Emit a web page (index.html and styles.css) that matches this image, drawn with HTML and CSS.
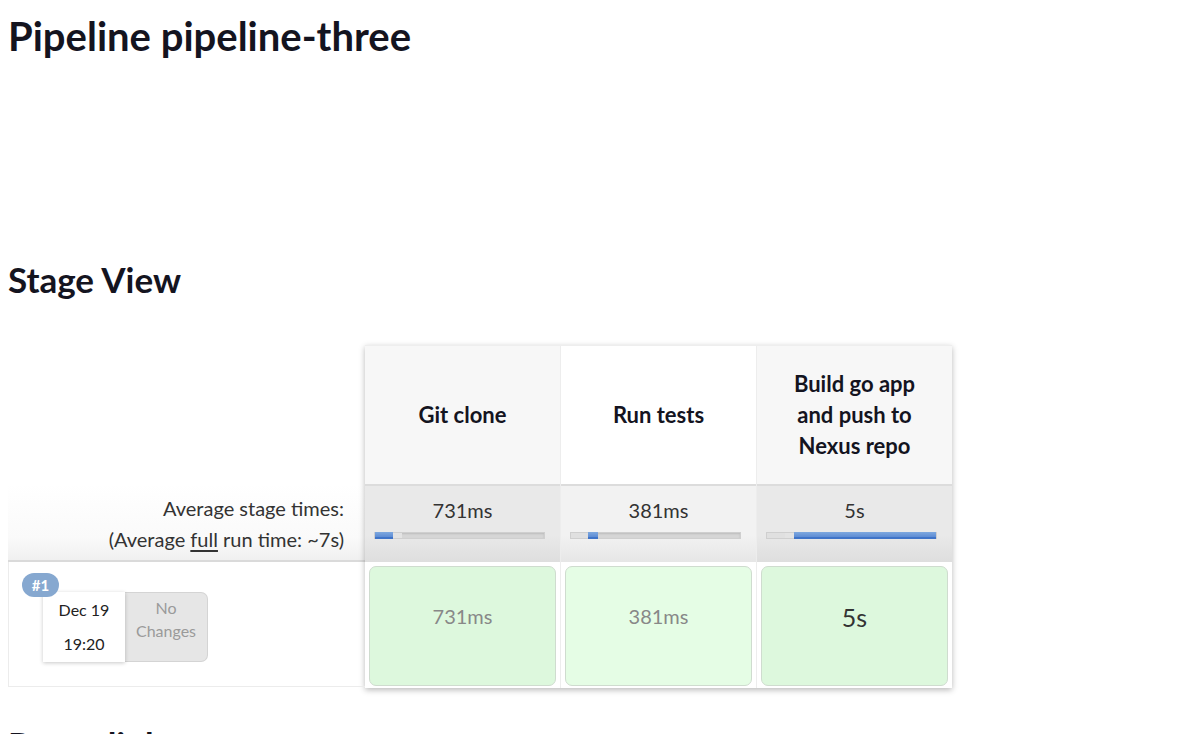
FILE: index.html
```html
<!DOCTYPE html>
<html>
<head>
<meta charset="utf-8">
<title>Pipeline pipeline-three</title>
<link rel="stylesheet" href="styles.css">
</head>
<body>
<h1 class="title">Pipeline pipeline-three</h1>
<h2 class="section">Stage View</h2>
<div class="stage-view">
  <div class="left-col">
    <div class="left-head"></div>
    <div class="left-avg">
      <div>Average stage times:</div>
      <div>(Average <u>full</u> run time: ~7s)</div>
    </div>
    <div class="left-build">
      <span class="badge">#1</span>
      <div class="build-info">
        <div class="build-date">
          <div>Dec 19</div>
          <div>19:20</div>
        </div>
        <div class="changes">No<br>Changes</div>
      </div>
    </div>
  </div>
  <div class="stages">
    <div class="stage-col odd">
      <div class="stage-head">Git clone</div>
      <div class="stage-avg">
        <div class="avg-time">731ms</div>
        <div class="track"><span class="seg-pre" style="width:0px"></span><span class="seg-bar" style="width:18px"></span><span class="seg-light" style="width:9px"></span></div>
      </div>
      <div class="stage-build"><div class="box box-a">731ms</div></div>
    </div>
    <div class="stage-col even">
      <div class="stage-head">Run tests</div>
      <div class="stage-avg">
        <div class="avg-time">381ms</div>
        <div class="track"><span class="seg-pre" style="width:17px"></span><span class="seg-bar" style="width:10px"></span></div>
      </div>
      <div class="stage-build"><div class="box box-b">381ms</div></div>
    </div>
    <div class="stage-col odd">
      <div class="stage-head">Build go app<br>and push to<br>Nexus repo</div>
      <div class="stage-avg">
        <div class="avg-time">5s</div>
        <div class="track"><span class="seg-pre" style="width:18px"></span><span class="seg-light" style="width:9px"></span><span class="seg-bar" style="width:144px"></span></div>
      </div>
      <div class="stage-build"><div class="box box-a big">5s</div></div>
    </div>
  </div>
</div>
<h2 class="section next">Permalinks</h2>
</body>
</html>
```

FILE: styles.css
```css
html, body {
  margin: 0;
  padding: 0;
  background: #fff;
}
body {
  padding: 0 8px;
  font-family: Lato, "Liberation Sans", sans-serif;
  color: #14141f;
  overflow: hidden;
  height: 734px;
}
.title {
  font-size: 40px;
  line-height: 48px;
  font-weight: 700;
  margin: 12px 0 0;
}
.section {
  font-size: 35px;
  line-height: 42px;
  font-weight: 700;
  margin: 198px 0 0;
}
.section.next {
  margin-top: 35px;
}
.stage-view {
  display: flex;
  margin-top: 45px;
}
.left-col {
  width: 357px;
  display: flex;
  flex-direction: column;
}
.left-head {
  height: 139px;
}
.left-avg {
  height: 78px;
  box-sizing: border-box;
  padding: 9px 21px 0 0;
  text-align: right;
  font-size: 20px;
  line-height: 31px;
  color: #333;
  background: linear-gradient(#fff 0%, #fafafa 70%, #f0f0f0 100%);
  border-bottom: 2px solid #dadada;
}
.left-avg u {
  text-decoration-thickness: 2px;
  text-underline-offset: 3px;
}
.left-build {
  position: relative;
  height: 125px;
  box-sizing: border-box;
  border-left: 1px solid #ececec;
  border-bottom: 1px solid #ececec;
  padding: 30px 0 0 34px;
}
.badge {
  position: absolute;
  left: 13px;
  top: 11px;
  width: 37px;
  height: 24px;
  border-radius: 12px;
  background: #86a8d0;
  color: #fff;
  font-weight: 700;
  font-size: 15px;
  line-height: 24px;
  text-align: center;
  z-index: 2;
}
.build-info {
  display: flex;
}
.build-date {
  width: 82px;
  height: 70px;
  box-sizing: border-box;
  background: #fff;
  box-shadow: 0 1px 4px rgba(0, 0, 0, 0.22);
  text-align: center;
  font-size: 16px;
  line-height: 34px;
  color: #222;
  padding-top: 1px;
  position: relative;
  z-index: 1;
}
.changes {
  width: 83px;
  height: 70px;
  box-sizing: border-box;
  background: #e6e6e6;
  border: 1px solid #d4d4d4;
  border-left: none;
  border-radius: 0 7px 7px 0;
  text-align: center;
  font-size: 16px;
  line-height: 23px;
  color: #9a9a9a;
  padding-top: 3px;
}
.stages {
  display: flex;
  box-shadow: 0 2px 6px rgba(0, 0, 0, 0.28);
  border-top: 1px solid #eee;
  align-self: flex-start;
}
.stage-col {
  width: 196px;
  display: flex;
  flex-direction: column;
  border-right: 1px solid #ededed;
  box-sizing: border-box;
}
.stage-col:last-child {
  border-right: none;
  width: 195px;
}
.stage-head {
  height: 138px;
  display: flex;
  align-items: center;
  justify-content: center;
  text-align: center;
  font-size: 22px;
  line-height: 31px;
  font-weight: 700;
  color: #14141f;
  padding-bottom: 2px;
  box-sizing: border-box;
}
.odd .stage-head {
  background: #f7f7f7;
}
.even .stage-head {
  background: #fff;
}
.stage-avg {
  height: 78px;
  box-sizing: border-box;
  border-top: 2px solid #dcdcdc;
  padding: 9px 0 0 9px;
}
.odd .stage-avg {
  background: linear-gradient(#e9e9e9 0%, #e9e9e9 65%, #dedede 100%);
}
.even .stage-avg {
  background: linear-gradient(#f2f2f2 0%, #f2f2f2 65%, #e6e6e6 100%);
}
.avg-time {
  text-align: center;
  font-size: 20px;
  line-height: 31px;
  color: #333;
  padding-right: 9px;
}
.track {
  margin-top: 6px;
  width: 171px;
  height: 7px;
  box-sizing: border-box;
  display: flex;
  background: #d6d6d6;
  border: 1px solid #cfcfcf;
  box-shadow: inset 0 1px 2px rgba(0, 0, 0, 0.12);
}
.seg-pre {
  display: block;
  height: 5px;
  background: #e0e0e0;
}
.seg-light {
  display: block;
  height: 5px;
  background: #e3e3e3;
}
.seg-bar {
  display: block;
  height: 7px;
  margin-top: -1px;
  box-sizing: border-box;
  background: linear-gradient(#7ea8df, #5d8cd4);
  border-bottom: 2px solid #3f74c8;
}
.stage-build {
  height: 126px;
  box-sizing: border-box;
  padding: 4px 4px 2px 4px;
  background: #fff;
}
.box {
  height: 100%;
  box-sizing: border-box;
  border: 1px solid #cfdccf;
  border-radius: 7px;
  display: flex;
  align-items: center;
  justify-content: center;
  padding-bottom: 21px;
  font-size: 20px;
  color: #888;
}
.box-a {
  background: #ddf8dd;
}
.box-b {
  background: #e5fde5;
}
.box.big {
  font-size: 25px;
  color: #333;
  padding-bottom: 19px;
}
```
